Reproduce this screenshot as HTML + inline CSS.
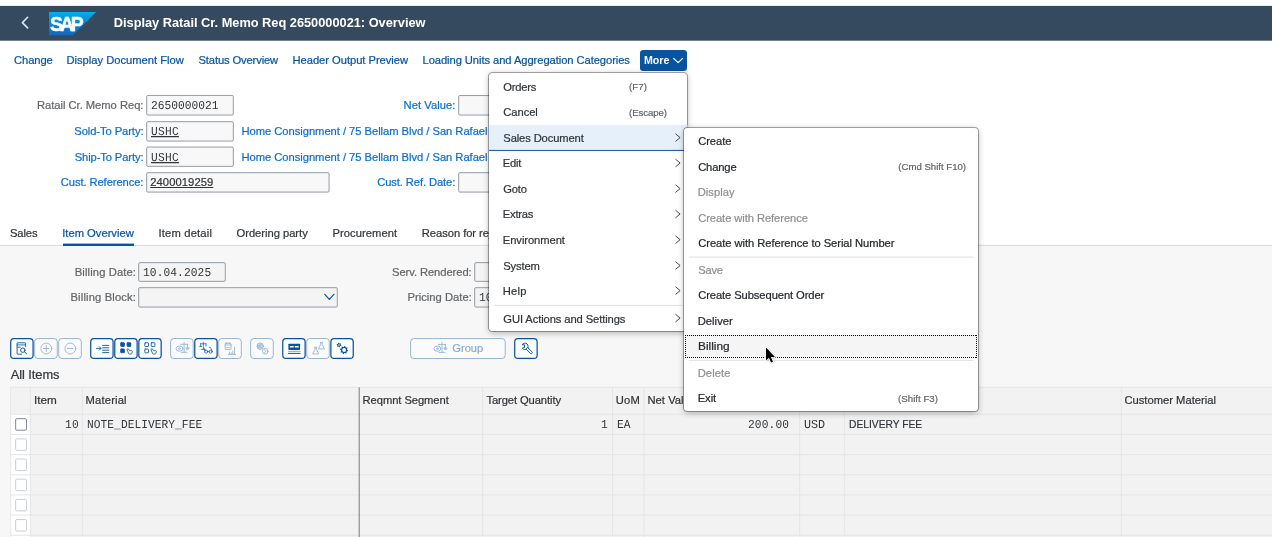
<!DOCTYPE html>
<html lang="en"><head><meta charset="utf-8"><title>Display Ratail Cr. Memo Req 2650000021: Overview</title>
<style>
html,body{margin:0;padding:0;background:#fff}
body{width:1272px;height:537px;overflow:hidden;position:relative;font-family:'Liberation Sans',sans-serif}
.bg{position:absolute;left:0;top:0;display:block}
.t{position:absolute;white-space:pre;line-height:1;-webkit-text-stroke:0.22px}
.layer{position:absolute;left:0;top:0;width:1272px;height:537px;will-change:transform}
.menu{position:absolute;background:#fff;border-radius:3.2px;box-shadow:0 0 0 0.8px rgba(0,0,0,.42),0 1.6px 6.4px 0 rgba(0,0,0,.3)}
</style></head>
<body>
<div class="layer">
<svg class="bg" width="1272" height="537" viewBox="0 0 1272 537"><rect x="0.00" y="5.90" width="1272.00" height="34.80" rx="0" fill="#354a5f" />
<polyline points="27.60,17.30 22.40,22.60 27.60,27.90" fill="none" stroke="#d1e8ff" stroke-width="1.6" stroke-linecap="round" stroke-linejoin="round" />
<defs><linearGradient id="sapg" x1="0" y1="0" x2="0" y2="1"><stop offset="0" stop-color="#00b1eb"/><stop offset="0.2" stop-color="#009ee0"/><stop offset="1" stop-color="#1565c0"/></linearGradient></defs>
<polygon points="49,12 96.1,12 72.9,35.3 49,35.3" fill="url(#sapg)"/>
<text x="50.1" y="30.85" font-family="'Liberation Sans',sans-serif" font-weight="bold" font-size="19.4" fill="#fff" stroke="#fff" stroke-width="0.5" textLength="33.6" lengthAdjust="spacing">SAP</text>
<rect x="640.00" y="50.00" width="47.00" height="21.00" rx="3.2" fill="#0854a0" />
<polyline points="673.60,58.40 678.10,62.60 682.60,58.40" fill="none" stroke="#fff" stroke-width="1.2" stroke-linecap="round" stroke-linejoin="round" />
<rect x="0.00" y="245.70" width="1272.00" height="291.30" rx="0" fill="#f7f7f7" />
<rect x="0.00" y="244.80" width="1272.00" height="1.00" rx="0" fill="#d9d9d9" />
<rect x="63.00" y="243.60" width="71.00" height="2.40" rx="0" fill="#0854a0" />
<rect x="146.70" y="95.45" width="86.60" height="19.60" rx="1.1" fill="rgba(242,242,242,.5)" stroke="#89919a" stroke-width="0.9" />
<rect x="146.70" y="121.70" width="86.60" height="19.35" rx="1.1" fill="rgba(242,242,242,.5)" stroke="#89919a" stroke-width="0.9" />
<rect x="146.70" y="147.05" width="86.60" height="19.30" rx="1.1" fill="rgba(242,242,242,.5)" stroke="#89919a" stroke-width="0.9" />
<rect x="146.70" y="172.70" width="182.35" height="19.35" rx="1.1" fill="rgba(242,242,242,.5)" stroke="#89919a" stroke-width="0.9" />
<rect x="458.70" y="95.55" width="100.85" height="19.50" rx="1.1" fill="rgba(242,242,242,.5)" stroke="#89919a" stroke-width="0.9" />
<rect x="458.70" y="172.70" width="100.85" height="19.35" rx="1.1" fill="rgba(242,242,242,.5)" stroke="#89919a" stroke-width="0.9" />
<rect x="138.70" y="262.65" width="86.60" height="18.70" rx="1.1" fill="rgba(242,242,242,.5)" stroke="#89919a" stroke-width="0.9" />
<rect x="138.70" y="287.70" width="198.60" height="19.35" rx="1.1" fill="rgba(242,242,242,.5)" stroke="#89919a" stroke-width="0.9" />
<rect x="474.70" y="262.65" width="84.85" height="18.70" rx="1.1" fill="rgba(242,242,242,.5)" stroke="#89919a" stroke-width="0.9" />
<rect x="474.70" y="287.70" width="84.85" height="19.35" rx="1.1" fill="rgba(242,242,242,.5)" stroke="#89919a" stroke-width="0.9" />
<polyline points="324.80,294.30 329.35,299.30 333.90,294.30" fill="none" stroke="#0854a0" stroke-width="1.2" stroke-linecap="round" stroke-linejoin="round" />
<rect x="10.72" y="338.68" width="22.35" height="19.70" rx="3.2" fill="#fff" stroke="#0854a0" stroke-width="1.25" />
<rect x="34.65" y="338.55" width="22.60" height="19.95" rx="3.2" fill="rgba(255,255,255,.55)" stroke="#0854a0" stroke-width="1" stroke-opacity=".4"/>
<rect x="58.70" y="338.55" width="22.60" height="19.95" rx="3.2" fill="rgba(255,255,255,.55)" stroke="#0854a0" stroke-width="1" stroke-opacity=".4"/>
<rect x="90.73" y="338.68" width="22.35" height="19.70" rx="3.2" fill="#fff" stroke="#0854a0" stroke-width="1.25" />
<rect x="114.78" y="338.68" width="22.35" height="19.70" rx="3.2" fill="#fff" stroke="#0854a0" stroke-width="1.25" />
<rect x="138.82" y="338.68" width="22.35" height="19.70" rx="3.2" fill="#fff" stroke="#0854a0" stroke-width="1.25" />
<rect x="170.60" y="338.55" width="22.60" height="19.95" rx="3.2" fill="rgba(255,255,255,.55)" stroke="#0854a0" stroke-width="1" stroke-opacity=".4"/>
<rect x="194.77" y="338.68" width="22.35" height="19.70" rx="3.2" fill="#fff" stroke="#0854a0" stroke-width="1.25" />
<rect x="218.70" y="338.55" width="22.60" height="19.95" rx="3.2" fill="rgba(255,255,255,.55)" stroke="#0854a0" stroke-width="1" stroke-opacity=".4"/>
<rect x="250.65" y="338.55" width="22.60" height="19.95" rx="3.2" fill="rgba(255,255,255,.55)" stroke="#0854a0" stroke-width="1" stroke-opacity=".4"/>
<rect x="282.77" y="338.68" width="22.35" height="19.70" rx="3.2" fill="#fff" stroke="#0854a0" stroke-width="1.25" />
<rect x="306.70" y="338.55" width="22.60" height="19.95" rx="3.2" fill="rgba(255,255,255,.55)" stroke="#0854a0" stroke-width="1" stroke-opacity=".4"/>
<rect x="330.88" y="338.68" width="22.35" height="19.70" rx="3.2" fill="#fff" stroke="#0854a0" stroke-width="1.25" />
<rect x="410.60" y="338.60" width="94.60" height="19.90" rx="3.2" fill="rgba(255,255,255,.55)" stroke="#0854a0" stroke-width="1" stroke-opacity=".4"/>
<rect x="514.73" y="338.68" width="22.40" height="19.70" rx="3.2" fill="#fff" stroke="#0854a0" stroke-width="1.25" />
<g fill="none" stroke="#0854a0" stroke-width="0.9" stroke-linecap="round" stroke-linejoin="round" opacity="1.0"><path d="M25.6,346.6 V343.4 Q25.6,342.8 25,342.8 H17.7 Q17.1,342.8 17.1,343.4 V353.6 Q17.1,354.2 17.7,354.2 H21.6"/><path d="M17.1,344.9 H25.6 M17.1,347.2 H20.4" stroke-width="0.8"/><circle cx="22.8" cy="350.2" r="2.2" stroke-width="1"/><path d="M24.5,351.8 L26.6,353.8" stroke-width="1"/></g>
<g fill="none" stroke="#0854a0" stroke-width="0.9" stroke-linecap="round" stroke-linejoin="round" opacity="0.42"><circle cx="46.3" cy="348.5" r="5.4"/><path d="M43.4,348.5 H49.2 M46.3,345.6 V351.4"/></g>
<g fill="none" stroke="#0854a0" stroke-width="0.9" stroke-linecap="round" stroke-linejoin="round" opacity="0.42"><circle cx="70.3" cy="348.5" r="5.4"/><path d="M67.4,348.5 H73.2"/></g>
<g fill="none" stroke="#0854a0" stroke-width="0.9" stroke-linecap="round" stroke-linejoin="round" opacity="1.0"><path d="M96.3,348.4 H100.8 M99.2,346.6 L101,348.4 L99.2,350.2" stroke-width="0.9"/><path d="M102.6,345.4 H108.8 M102.6,347.8 H108.8 M102.6,350.2 H108.8 M102.6,352.6 H108.8" stroke-width="0.9"/></g>
<g fill="none" stroke="#0854a0" stroke-width="0.9" stroke-linecap="round" stroke-linejoin="round" opacity="1.0"><rect x="120.7" y="342.7" width="3.7" height="3.7" rx="0.5" fill="#0854a0" stroke-width="0.85"/><rect x="127.1" y="342.7" width="3.7" height="3.7" rx="0.5" fill="#0854a0" stroke-width="0.85"/><rect x="120.7" y="349.0" width="3.7" height="3.7" rx="0.5" fill="#0854a0" stroke-width="0.85"/><path d="M127.3,349.1 L128.3,348.8 L129.6,350.70000000000005 L131.8,350.70000000000005 Q132.4,350.8 132.3,351.5 L131.9,353.40000000000003 Q131.8,354.0 131.2,354.0 L129.3,354.0 Q128.7,354.0 128.5,353.40000000000003 Z" stroke-width="0.8" fill="#fff"/></g>
<g fill="none" stroke="#0854a0" stroke-width="0.9" stroke-linecap="round" stroke-linejoin="round" opacity="1.0"><rect x="144.8" y="342.8" width="3.7" height="3.7" rx="0.5" fill="none" stroke-width="0.85"/><rect x="151.2" y="342.8" width="3.7" height="3.7" rx="0.5" fill="none" stroke-width="0.85"/><rect x="144.8" y="349.1" width="3.7" height="3.7" rx="0.5" fill="none" stroke-width="0.85"/><path d="M151.3,349.1 L152.3,348.8 L153.60000000000002,350.70000000000005 L155.8,350.70000000000005 Q156.4,350.8 156.3,351.5 L155.9,353.40000000000003 Q155.8,354.0 155.20000000000002,354.0 L153.3,354.0 Q152.70000000000002,354.0 152.5,353.40000000000003 Z" stroke-width="0.8" fill="#fff"/></g>
<g fill="none" stroke="#0854a0" stroke-width="0.9" stroke-linecap="round" stroke-linejoin="round" opacity="0.42"><path d="M184.1,342.5 V352.3 M181.1,352.3 H187.1 M180.5,344.3 H187.70000000000002"/><ellipse cx="179.5" cy="348.6" rx="3.5" ry="2.6"/><circle cx="179.5" cy="348.6" r="0.9"/><path d="M185.9,348.2 a1.6,1.4 0 0 0 3.2,0 Z M187.5,344.3 V348.2"/></g>
<g fill="none" stroke="#0854a0" stroke-width="0.9" stroke-linecap="round" stroke-linejoin="round" opacity="1.0"><path d="M203.3,342.3 V349.4 M201.2,349.4 H205.4 M200.4,343.8 H206.2 M200.6,343.8 V346.3 M206,343.8 V346 M199.6,346.4 H201.8" stroke-width="0.7"/><circle cx="206.2" cy="351.7" r="1.5" stroke-width="0.75"/><circle cx="210.7" cy="351.7" r="1.5" stroke-width="0.75"/><path d="M207.7,351.4 H209.2 M204.7,351.2 L204.2,348.2 M212.2,351.2 L210.4,347.4 H209.4" stroke-width="0.7"/></g>
<g fill="none" stroke="#0854a0" stroke-width="0.9" stroke-linecap="round" stroke-linejoin="round" opacity="0.42"><rect x="225.2" y="343.3" width="5.8" height="6.3" rx="0.4"/><path d="M225.2,345 H231 M226.8,342.4 V343.3 M229.4,342.4 V343.3 M226.6,347.6 H229.6" stroke-width="0.8"/><path d="M228.3,354.4 H235.6 M229.4,354.2 V352 M231.2,354.2 V352.8 M232.8,354.2 V351 M234.6,354.2 V347.2" stroke-width="0.9"/></g>
<g fill="none" stroke="#0854a0" stroke-width="0.9" stroke-linecap="round" stroke-linejoin="round" opacity="0.42"><circle cx="260.2" cy="346.2" r="3.2" fill="rgba(8,84,160,.45)"/><path d="M261.4,344.8 Q259.4,344 258.9,346.2 Q259.4,348.4 261.4,347.6 M258,345.7 H260.6 M258,346.9 H260.4" stroke-width="0.7"/><circle cx="265.2" cy="351.3" r="2.8" fill="#fbfbfb"/><path d="M264.4,349.9 L266.2,351.3 L264.4,352.7" stroke-width="0.8"/></g>
<g fill="none" stroke="#0854a0" stroke-width="0.9" stroke-linecap="round" stroke-linejoin="round" opacity="1.0"><rect x="288.4" y="343.7" width="11.7" height="6.2" rx="0.6" fill="#0854a0" stroke="none"/><path d="M290.4,346.8 H293.2 M295.3,346.8 H298.1" stroke="#fff" stroke-width="1.4"/><path d="M288.4,351.4 H300.1" stroke-width="0.9" opacity=".55"/><path d="M288.4,353.4 H300.1" stroke-width="1"/></g>
<g fill="none" stroke="#0854a0" stroke-width="0.9" stroke-linecap="round" stroke-linejoin="round" opacity="0.42"><path d="M320.29999999999995,342.4 H322.5 M320.7,342.4 V344.4 L318.4,349.0 H324.4 L322.09999999999997,344.4 V342.4"/><path d="M314.59999999999997,347.3 H316.8 M315.0,347.3 V349.3 L312.7,353.90000000000003 H318.7 L316.4,349.3 V347.3"/></g>
<g fill="none" stroke="#0854a0" stroke-width="0.9" stroke-linecap="round" stroke-linejoin="round" opacity="1.0"><path d="M348.18,350.40 L348.02,351.19 L346.83,351.46 L346.50,351.97 L346.70,353.17 L346.03,353.62 L345.00,352.97 L344.40,353.09 L343.70,354.08 L342.91,353.92 L342.64,352.73 L342.13,352.40 L340.93,352.60 L340.48,351.93 L341.13,350.90 L341.01,350.30 L340.02,349.60 L340.18,348.81 L341.37,348.54 L341.70,348.03 L341.50,346.83 L342.17,346.38 L343.20,347.03 L343.80,346.91 L344.50,345.92 L345.29,346.08 L345.56,347.27 L346.07,347.60 L347.27,347.40 L347.72,348.07 L347.07,349.10 L347.19,349.70 Z M346.00,350.00 A1.9,1.9 0 1 0 342.20,350.00 A1.9,1.9 0 1 0 346.00,350.00 Z" fill="#0854a0" fill-rule="evenodd" stroke="none"/><path d="M341.28,345.30 L341.12,345.88 L340.35,346.03 L340.03,346.35 L339.88,347.12 L339.30,347.28 L338.78,346.69 L338.35,346.57 L337.60,346.82 L337.18,346.40 L337.43,345.65 L337.31,345.22 L336.72,344.70 L336.88,344.12 L337.65,343.97 L337.97,343.65 L338.12,342.88 L338.70,342.72 L339.22,343.31 L339.65,343.43 L340.40,343.18 L340.82,343.60 L340.57,344.35 L340.69,344.78 Z M339.80,345.00 A0.8,0.8 0 1 0 338.20,345.00 A0.8,0.8 0 1 0 339.80,345.00 Z" fill="#0854a0" fill-rule="evenodd" stroke="none"/></g>
<g fill="none" stroke="#0854a0" stroke-width="0.9" stroke-linecap="round" stroke-linejoin="round" opacity="0.42"><path d="M442.0,342.6 V352.40000000000003 M439.0,352.40000000000003 H445.0 M438.40000000000003,344.40000000000003 H445.6"/><ellipse cx="437.40000000000003" cy="348.70000000000005" rx="3.5" ry="2.6"/><circle cx="437.40000000000003" cy="348.70000000000005" r="0.9"/><path d="M443.8,348.3 a1.6,1.4 0 0 0 3.2,0 Z M445.40000000000003,344.40000000000003 V348.3"/></g>
<g fill="none" stroke="#0854a0" stroke-width="0.9" stroke-linecap="round" stroke-linejoin="round" opacity="1.0"><path d="M522.3,344.4 A3.2,3.2 0 1 1 522.3,348.2 L524.6,347.4 L524.6,345.2 Z" stroke-width="1" fill="#fff"/><rect x="527.4" y="345.15" width="7.5" height="2.3" rx="1.1" fill="#fff" stroke-width="0.9" transform="rotate(45 524.9 346.3)"/></g>
<rect x="10.50" y="387.30" width="1261.50" height="26.90" rx="0" fill="#f2f2f2" />
<rect x="10.50" y="414.20" width="19.90" height="122.80" rx="0" fill="#fff" />
<rect x="30.40" y="414.20" width="1241.60" height="122.80" rx="0" fill="#f2f2f2" />
<line x1="10.50" y1="387.30" x2="1272.00" y2="387.30" stroke="#e3e3e3" stroke-width="0.9"/>
<line x1="10.50" y1="414.25" x2="1272.00" y2="414.25" stroke="#e3e3e3" stroke-width="0.9"/>
<line x1="10.50" y1="434.42" x2="1272.00" y2="434.42" stroke="#e3e3e3" stroke-width="0.9"/>
<line x1="10.50" y1="454.59" x2="1272.00" y2="454.59" stroke="#e3e3e3" stroke-width="0.9"/>
<line x1="10.50" y1="474.76" x2="1272.00" y2="474.76" stroke="#e3e3e3" stroke-width="0.9"/>
<line x1="10.50" y1="494.93" x2="1272.00" y2="494.93" stroke="#e3e3e3" stroke-width="0.9"/>
<line x1="10.50" y1="515.10" x2="1272.00" y2="515.10" stroke="#e3e3e3" stroke-width="0.9"/>
<line x1="10.50" y1="535.27" x2="1272.00" y2="535.27" stroke="#e3e3e3" stroke-width="0.9"/>
<line x1="10.70" y1="387.30" x2="10.70" y2="537.00" stroke="#e3e3e3" stroke-width="0.9"/>
<line x1="30.40" y1="387.30" x2="30.40" y2="537.00" stroke="#e3e3e3" stroke-width="0.9"/>
<line x1="82.40" y1="387.30" x2="82.40" y2="537.00" stroke="#e3e3e3" stroke-width="0.9"/>
<line x1="482.60" y1="387.30" x2="482.60" y2="537.00" stroke="#e3e3e3" stroke-width="0.9"/>
<line x1="612.50" y1="387.30" x2="612.50" y2="537.00" stroke="#e3e3e3" stroke-width="0.9"/>
<line x1="644.10" y1="387.30" x2="644.10" y2="537.00" stroke="#e3e3e3" stroke-width="0.9"/>
<line x1="799.60" y1="387.30" x2="799.60" y2="537.00" stroke="#e3e3e3" stroke-width="0.9"/>
<line x1="844.40" y1="387.30" x2="844.40" y2="537.00" stroke="#e3e3e3" stroke-width="0.9"/>
<line x1="1121.40" y1="387.30" x2="1121.40" y2="537.00" stroke="#e3e3e3" stroke-width="0.9"/>
<line x1="359.20" y1="387.30" x2="359.20" y2="537.00" stroke="#6a6d70" stroke-width="0.9"/>
<rect x="15.65" y="418.70" width="10.80" height="11.50" rx="1.1" fill="#fff" stroke="#6f7b89" stroke-width="0.9" />
<rect x="15.65" y="438.87" width="10.80" height="11.50" rx="1.1" fill="#fff" stroke="#c4c9cf" stroke-width="0.9" />
<rect x="15.65" y="459.04" width="10.80" height="11.50" rx="1.1" fill="#fff" stroke="#c4c9cf" stroke-width="0.9" />
<rect x="15.65" y="479.21" width="10.80" height="11.50" rx="1.1" fill="#fff" stroke="#c4c9cf" stroke-width="0.9" />
<rect x="15.65" y="499.38" width="10.80" height="11.50" rx="1.1" fill="#fff" stroke="#c4c9cf" stroke-width="0.9" />
<rect x="15.65" y="519.55" width="10.80" height="11.50" rx="1.1" fill="#fff" stroke="#c4c9cf" stroke-width="0.9" /></svg>
<span class="t" style="left:113.75px;top:17px;font:bold 12.8px/1 'Liberation Sans',sans-serif;color:#fff;letter-spacing:-0.011px;-webkit-text-stroke:0">Display Ratail Cr. Memo Req 2650000021: Overview</span>
<span class="t" style="left:14.10px;top:55px;font:11.2px/1 'Liberation Sans',sans-serif;color:#0854a0;letter-spacing:-0.110px">Change</span>
<span class="t" style="left:66.40px;top:55px;font:11.2px/1 'Liberation Sans',sans-serif;color:#0854a0;letter-spacing:0.000px">Display Document Flow</span>
<span class="t" style="left:198.50px;top:55px;font:11.2px/1 'Liberation Sans',sans-serif;color:#0854a0;letter-spacing:-0.125px">Status Overview</span>
<span class="t" style="left:292.50px;top:55px;font:11.2px/1 'Liberation Sans',sans-serif;color:#0854a0;letter-spacing:-0.037px">Header Output Preview</span>
<span class="t" style="left:422.50px;top:55px;font:11.2px/1 'Liberation Sans',sans-serif;color:#0854a0;letter-spacing:-0.071px">Loading Units and Aggregation Categories</span>
<span class="t" style="left:644.04px;top:55px;font:bold 11.2px/1 'Liberation Sans',sans-serif;color:#fff;transform:rotate(0deg) scale(0.9515,1);transform-origin:0 9px;-webkit-text-stroke:0">More</span>
<span class="t" style="left:37.00px;top:100px;font:11.2px/1 'Liberation Sans',sans-serif;color:#63666a;letter-spacing:-0.026px">Ratail Cr. Memo Req:</span>
<span class="t" style="left:74.25px;top:126px;font:11.2px/1 'Liberation Sans',sans-serif;color:#0a6ed1;letter-spacing:-0.077px">Sold-To Party:</span>
<span class="t" style="left:74.75px;top:152px;font:11.2px/1 'Liberation Sans',sans-serif;color:#0a6ed1;letter-spacing:-0.115px">Ship-To Party:</span>
<span class="t" style="left:60.75px;top:177px;font:11.2px/1 'Liberation Sans',sans-serif;color:#0a6ed1;letter-spacing:-0.083px">Cust. Reference:</span>
<span class="t" style="left:403.50px;top:100px;font:11.2px/1 'Liberation Sans',sans-serif;color:#0a6ed1;letter-spacing:0.056px">Net Value:</span>
<span class="t" style="left:377.25px;top:177px;font:11.2px/1 'Liberation Sans',sans-serif;color:#0a6ed1;letter-spacing:-0.100px">Cust. Ref. Date:</span>
<span class="t" style="left:241.50px;top:126px;font:11.2px/1 'Liberation Sans',sans-serif;color:#0a6ed1;letter-spacing:-0.033px">Home Consignment / 75 Bellam Blvd / San Rafael</span>
<span class="t" style="left:241.50px;top:152px;font:11.2px/1 'Liberation Sans',sans-serif;color:#0a6ed1;letter-spacing:-0.033px">Home Consignment / 75 Bellam Blvd / San Rafael</span>
<span class="t" style="left:150.50px;top:101px;font:11.2px/1 'Liberation Mono',monospace;color:#32363a;letter-spacing:0.028px;transform:rotate(0.03deg) scaleY(1.08);transform-origin:0 8px;-webkit-text-stroke:0">2650000021</span>
<span class="t" style="left:150.50px;top:127px;font:11.2px/1 'Liberation Mono',monospace;color:#32363a;letter-spacing:0.250px;transform:rotate(0.03deg) scaleY(1.08);transform-origin:0 8px;text-decoration:underline;-webkit-text-stroke:0">USHC</span>
<span class="t" style="left:150.50px;top:153px;font:11.2px/1 'Liberation Mono',monospace;color:#32363a;letter-spacing:0.250px;transform:rotate(0.03deg) scaleY(1.08);transform-origin:0 8px;text-decoration:underline;-webkit-text-stroke:0">USHC</span>
<span class="t" style="left:150.25px;top:177px;font:11.2px/1 'Liberation Sans',sans-serif;color:#32363a;letter-spacing:0.083px;text-decoration:underline">2400019259</span>
<span class="t" style="left:10.00px;top:228px;font:11.2px/1 'Liberation Sans',sans-serif;color:#32363a;letter-spacing:-0.125px">Sales</span>
<span class="t" style="left:62.25px;top:228px;font:11.2px/1 'Liberation Sans',sans-serif;color:#0854a0;letter-spacing:0.000px">Item Overview</span>
<span class="t" style="left:158.50px;top:228px;font:11.2px/1 'Liberation Sans',sans-serif;color:#32363a;letter-spacing:0.175px">Item detail</span>
<span class="t" style="left:236.50px;top:228px;font:11.2px/1 'Liberation Sans',sans-serif;color:#32363a;letter-spacing:-0.019px">Ordering party</span>
<span class="t" style="left:332.50px;top:228px;font:11.2px/1 'Liberation Sans',sans-serif;color:#32363a;letter-spacing:0.050px">Procurement</span>
<span class="t" style="left:421.75px;top:228px;font:11.2px/1 'Liberation Sans',sans-serif;color:#32363a;letter-spacing:-0.042px">Reason for rejection</span>
<span class="t" style="left:74.75px;top:267px;font:11.2px/1 'Liberation Sans',sans-serif;color:#63666a;letter-spacing:0.125px">Billing Date:</span>
<span class="t" style="left:70.50px;top:292px;font:11.2px/1 'Liberation Sans',sans-serif;color:#63666a;letter-spacing:0.154px">Billing Block:</span>
<span class="t" style="left:142.50px;top:268px;font:11.2px/1 'Liberation Mono',monospace;color:#32363a;letter-spacing:0.111px;transform:rotate(0.03deg) scaleY(1.08);transform-origin:0 8px;-webkit-text-stroke:0">10.04.2025</span>
<span class="t" style="left:392.00px;top:267px;font:11.2px/1 'Liberation Sans',sans-serif;color:#63666a;letter-spacing:-0.071px">Serv. Rendered:</span>
<span class="t" style="left:407.50px;top:292px;font:11.2px/1 'Liberation Sans',sans-serif;color:#63666a;letter-spacing:0.021px">Pricing Date:</span>
<span class="t" style="left:478.50px;top:293px;font:11.2px/1 'Liberation Mono',monospace;color:#32363a;letter-spacing:0.111px;transform:rotate(0.03deg) scaleY(1.08);transform-origin:0 8px;-webkit-text-stroke:0">10.04.2025</span>
<span class="t" style="left:10.75px;top:369px;font:12.8px/1 'Liberation Sans',sans-serif;color:#32363a;letter-spacing:-0.050px">All Items</span>
<span class="t" style="left:452.30px;top:343px;font:11.2px/1 'Liberation Sans',sans-serif;color:rgba(8,84,160,.42);letter-spacing:-0.038px">Group</span>
<span class="t" style="left:34.25px;top:395px;font:11.2px/1 'Liberation Sans',sans-serif;color:#32363a;transform:rotate(0deg) scale(1.0500,1);transform-origin:0 9px">Item</span>
<span class="t" style="left:85.60px;top:395px;font:11.2px/1 'Liberation Sans',sans-serif;color:#32363a;letter-spacing:0.171px">Material</span>
<span class="t" style="left:362.60px;top:395px;font:11.2px/1 'Liberation Sans',sans-serif;color:#32363a;letter-spacing:-0.069px">Reqmnt Segment</span>
<span class="t" style="left:486.45px;top:395px;font:11.2px/1 'Liberation Sans',sans-serif;color:#32363a;letter-spacing:-0.093px">Target Quantity</span>
<span class="t" style="left:615.65px;top:395px;font:11.2px/1 'Liberation Sans',sans-serif;color:#32363a;letter-spacing:0.250px">UoM</span>
<span class="t" style="left:647.50px;top:395px;font:11.2px/1 'Liberation Sans',sans-serif;color:#32363a;letter-spacing:0.031px">Net Value</span>
<span class="t" style="left:1124.40px;top:395px;font:11.2px/1 'Liberation Sans',sans-serif;color:#32363a;letter-spacing:0.009px">Customer Material</span>
<span class="t" style="left:64.65px;top:420px;font:11.2px/1 'Liberation Mono',monospace;color:#32363a;letter-spacing:0.300px;transform:rotate(0.03deg) scaleY(1.08);transform-origin:0 8px;-webkit-text-stroke:0">10</span>
<span class="t" style="left:86.85px;top:420px;font:11.2px/1 'Liberation Mono',monospace;color:#32363a;letter-spacing:0.062px;transform:rotate(0.03deg) scaleY(1.08);transform-origin:0 8px;-webkit-text-stroke:0">NOTE_DELIVERY_FEE</span>
<span class="t" style="left:601.25px;top:420px;font:11.2px/1 'Liberation Mono',monospace;color:#32363a;letter-spacing:0.000px;transform:rotate(0.03deg) scaleY(1.08);transform-origin:0 8px;-webkit-text-stroke:0">1</span>
<span class="t" style="left:617.05px;top:420px;font:11.2px/1 'Liberation Mono',monospace;color:#32363a;letter-spacing:0.150px;transform:rotate(0.03deg) scaleY(1.08);transform-origin:0 8px;-webkit-text-stroke:0">EA</span>
<span class="t" style="left:747.65px;top:420px;font:11.2px/1 'Liberation Mono',monospace;color:#32363a;letter-spacing:0.160px;transform:rotate(0.03deg) scaleY(1.08);transform-origin:0 8px;-webkit-text-stroke:0">200.00</span>
<span class="t" style="left:804.01px;top:420px;font:11.2px/1 'Liberation Mono',monospace;color:#32363a;transform:rotate(0.03deg) scale(1.0474,1.08);transform-origin:0 8px;-webkit-text-stroke:0">USD</span>
<span class="t" style="left:849.18px;top:419px;font:11.2px/1 'Liberation Sans',sans-serif;color:#32363a;transform:rotate(0deg) scale(0.9163,1);transform-origin:0 9px">DELIVERY FEE</span>
</div>
<div class="layer">
<div class="menu" style="left:489.2px;top:72.8px;width:197.4px;height:258.2px"></div>
<svg class="bg" width="1272" height="537" viewBox="0 0 1272 537"><rect x="489.00" y="124.90" width="198.50" height="25.40" rx="0" fill="#e5f0fa" />
<rect x="489.00" y="149.90" width="198.50" height="1.00" rx="0" fill="#0854a0" />
<line x1="494.30" y1="305.40" x2="682.50" y2="305.40" stroke="#dcdcdc" stroke-width="0.9"/>
<polyline points="675.80,134.00 680.10,137.60 675.80,141.20" fill="none" stroke="#32363a" stroke-width="0.9" stroke-linecap="round" stroke-linejoin="round" />
<polyline points="675.80,159.40 680.10,163.00 675.80,166.60" fill="none" stroke="#32363a" stroke-width="0.9" stroke-linecap="round" stroke-linejoin="round" />
<polyline points="675.80,185.00 680.10,188.60 675.80,192.20" fill="none" stroke="#32363a" stroke-width="0.9" stroke-linecap="round" stroke-linejoin="round" />
<polyline points="675.80,210.40 680.10,214.00 675.80,217.60" fill="none" stroke="#32363a" stroke-width="0.9" stroke-linecap="round" stroke-linejoin="round" />
<polyline points="675.80,236.10 680.10,239.70 675.80,243.30" fill="none" stroke="#32363a" stroke-width="0.9" stroke-linecap="round" stroke-linejoin="round" />
<polyline points="675.80,261.90 680.10,265.50 675.80,269.10" fill="none" stroke="#32363a" stroke-width="0.9" stroke-linecap="round" stroke-linejoin="round" />
<polyline points="675.80,287.00 680.10,290.60 675.80,294.20" fill="none" stroke="#32363a" stroke-width="0.9" stroke-linecap="round" stroke-linejoin="round" />
<polyline points="675.80,314.50 680.10,318.10 675.80,321.70" fill="none" stroke="#32363a" stroke-width="0.9" stroke-linecap="round" stroke-linejoin="round" /></svg>
<span class="t" style="left:503.30px;top:82px;font:11.2px/1 'Liberation Sans',sans-serif;color:#32363a;letter-spacing:-0.210px">Orders</span>
<span class="t" style="left:503.30px;top:107px;font:11.2px/1 'Liberation Sans',sans-serif;color:#32363a;letter-spacing:-0.060px">Cancel</span>
<span class="t" style="left:503.30px;top:133px;font:11.2px/1 'Liberation Sans',sans-serif;color:#32363a;letter-spacing:-0.123px">Sales Document</span>
<span class="t" style="left:502.80px;top:158px;font:11.2px/1 'Liberation Sans',sans-serif;color:#32363a;letter-spacing:-0.217px">Edit</span>
<span class="t" style="left:503.30px;top:184px;font:11.2px/1 'Liberation Sans',sans-serif;color:#32363a;letter-spacing:-0.183px">Goto</span>
<span class="t" style="left:502.80px;top:209px;font:11.2px/1 'Liberation Sans',sans-serif;color:#32363a;letter-spacing:-0.210px">Extras</span>
<span class="t" style="left:502.80px;top:235px;font:11.2px/1 'Liberation Sans',sans-serif;color:#32363a;letter-spacing:-0.065px">Environment</span>
<span class="t" style="left:503.30px;top:261px;font:11.2px/1 'Liberation Sans',sans-serif;color:#32363a;letter-spacing:-0.150px">System</span>
<span class="t" style="left:502.80px;top:286px;font:11.2px/1 'Liberation Sans',sans-serif;color:#32363a;letter-spacing:0.200px">Help</span>
<span class="t" style="left:503.30px;top:314px;font:11.2px/1 'Liberation Sans',sans-serif;color:#32363a;letter-spacing:-0.096px">GUI Actions and Settings</span>
<span class="t" style="left:629.10px;top:82px;font:9.6px/1 'Liberation Sans',sans-serif;color:#63666a;letter-spacing:0.067px">(F7)</span>
<span class="t" style="left:629.10px;top:108px;font:9.6px/1 'Liberation Sans',sans-serif;color:#63666a;letter-spacing:-0.093px">(Escape)</span>
</div>
<div class="layer">
<div class="menu" style="left:683.9px;top:127.8px;width:294.5px;height:283px"></div>
<svg class="bg" width="1272" height="537" viewBox="0 0 1272 537"><line x1="688.80" y1="257.10" x2="973.90" y2="257.10" stroke="#dcdcdc" stroke-width="0.9"/>
<line x1="688.80" y1="360.30" x2="973.90" y2="360.30" stroke="#dcdcdc" stroke-width="0.9"/>
<rect x="685.00" y="335.00" width="292.00" height="23.00" rx="0" fill="#f5f5f5" />
<line x1="685" y1="335.5" x2="977" y2="335.5" stroke="#000" stroke-width="1" stroke-dasharray="1 1"/>
<line x1="685" y1="357.5" x2="977" y2="357.5" stroke="#000" stroke-width="1" stroke-dasharray="1 1"/>
<line x1="685.5" y1="335" x2="685.5" y2="358" stroke="#000" stroke-width="1" stroke-dasharray="1 1"/>
<line x1="976.5" y1="335" x2="976.5" y2="358" stroke="#000" stroke-width="1" stroke-dasharray="1 1"/></svg>
<span class="t" style="left:698.20px;top:136px;font:11.2px/1 'Liberation Sans',sans-serif;color:#25292d;letter-spacing:-0.070px">Create</span>
<span class="t" style="left:698.20px;top:162px;font:11.2px/1 'Liberation Sans',sans-serif;color:#25292d;letter-spacing:-0.150px">Change</span>
<span class="t" style="left:697.70px;top:187px;font:11.2px/1 'Liberation Sans',sans-serif;color:#8e9092;letter-spacing:0.033px">Display</span>
<span class="t" style="left:698.20px;top:213px;font:11.2px/1 'Liberation Sans',sans-serif;color:#8e9092;letter-spacing:-0.078px">Create with Reference</span>
<span class="t" style="left:698.20px;top:238px;font:11.2px/1 'Liberation Sans',sans-serif;color:#25292d;letter-spacing:-0.055px">Create with Reference to Serial Number</span>
<span class="t" style="left:698.20px;top:265px;font:11.2px/1 'Liberation Sans',sans-serif;color:#8e9092;letter-spacing:-0.233px">Save</span>
<span class="t" style="left:698.20px;top:290px;font:11.2px/1 'Liberation Sans',sans-serif;color:#25292d;letter-spacing:-0.091px">Create Subsequent Order</span>
<span class="t" style="left:697.70px;top:316px;font:11.2px/1 'Liberation Sans',sans-serif;color:#25292d;letter-spacing:0.042px">Deliver</span>
<span class="t" style="left:697.64px;top:341px;font:11.2px/1 'Liberation Sans',sans-serif;color:#25292d;transform:rotate(0deg) scale(1.0584,1);transform-origin:0 9px">Billing</span>
<span class="t" style="left:697.70px;top:368px;font:11.2px/1 'Liberation Sans',sans-serif;color:#8e9092;letter-spacing:0.080px">Delete</span>
<span class="t" style="left:697.70px;top:393px;font:11.2px/1 'Liberation Sans',sans-serif;color:#25292d;letter-spacing:-0.050px">Exit</span>
<span class="t" style="left:898.30px;top:162px;font:9.6px/1 'Liberation Sans',sans-serif;color:#63666a;letter-spacing:0.004px">(Cmd Shift F10)</span>
<span class="t" style="left:898.10px;top:394px;font:9.6px/1 'Liberation Sans',sans-serif;color:#63666a;letter-spacing:0.044px">(Shift F3)</span>
</div>
<svg class="bg" width="1272" height="537" viewBox="0 0 1272 537"><defs><filter id="cs" x="-50%" y="-50%" width="200%" height="200%"><feGaussianBlur stdDeviation="0.8"/></filter></defs><polygon points="766.00,347.60 766.00,360.40 768.88,357.68 771.12,362.48 773.04,361.68 770.88,357.04 774.96,357.04" fill="rgba(0,0,0,.35)" filter="url(#cs)" transform="translate(0.5,1)"/><polygon points="766.00,347.60 766.00,360.40 768.88,357.68 771.12,362.48 773.04,361.68 770.88,357.04 774.96,357.04" fill="#000" stroke="#fff" stroke-width="1.6" paint-order="stroke" stroke-linejoin="round"/></svg>
</body></html>
